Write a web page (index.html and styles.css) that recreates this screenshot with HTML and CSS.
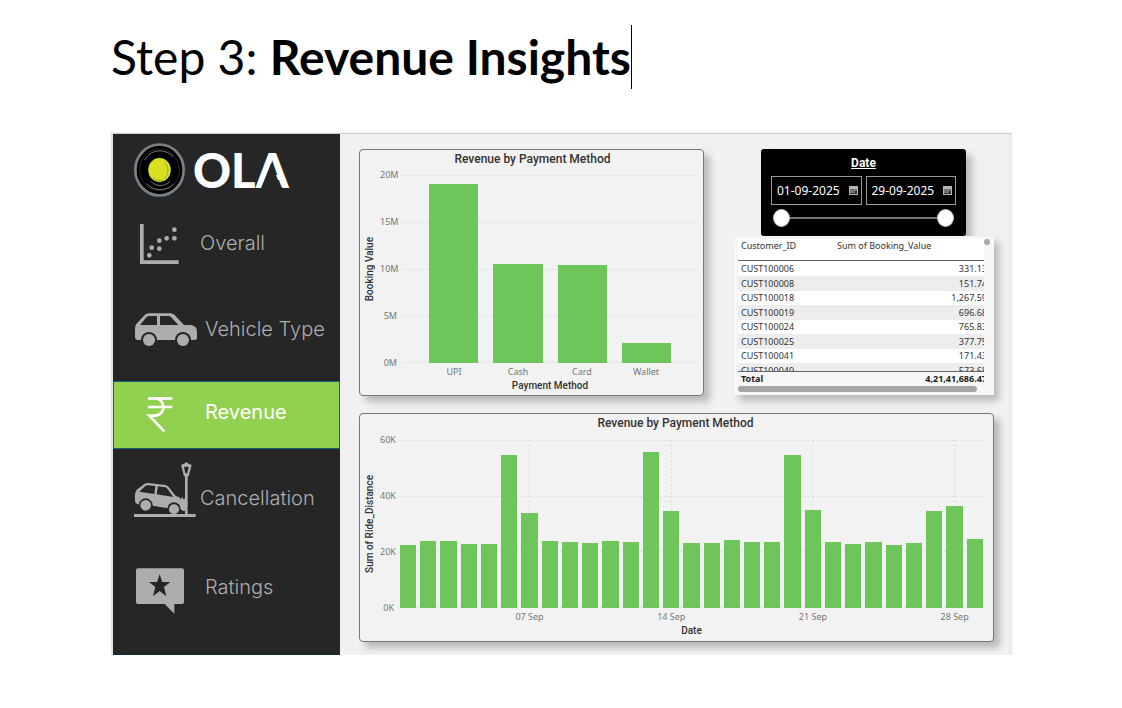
FILE: index.html
```html
<!DOCTYPE html>
<html lang="en">
<head>
<meta charset="utf-8">
<meta name="viewport" content="width=device-width, initial-scale=1">
<title>Revenue Insights</title>
<link rel="stylesheet" href="styles.css">
</head>
<body>
<main class="page">
  <h1 class="heading">Step 3: <strong>Revenue Insights</strong></h1>
  <div class="dashboard">
    <aside class="sidebar">
      <div class="brand">
        <svg class="brand-mark" viewBox="83 50 160 168" aria-hidden="true">
          <ellipse cx="163" cy="134" rx="78" ry="82" fill="#000" stroke="#123a52" stroke-width="3"/>
          <ellipse cx="163" cy="134" rx="73" ry="77" fill="none" stroke="#808080" stroke-width="8"/>
          <ellipse cx="163" cy="134" rx="60" ry="63" fill="none" stroke="#3a3a3a" stroke-width="2"/>
          <path d="M118 104c18-34 62-36 86-10M124 175c20 24 60 24 80 2M137 168c12 16 42 18 58 0" fill="none" stroke="#777" stroke-width="3"/>
          <ellipse cx="163" cy="134" rx="34" ry="36" fill="#d7e021"/>
          <path d="M179 112c14 14 12 36-4 50M144 158c8 7 18 10 30 7" fill="none" stroke="#a0a63a" stroke-width="3"/>
        </svg>
        <span class="brand-name">OLA</span>
      </div>
      <nav class="nav">
        <a class="nav-item" href="#overall">
          <svg class="nav-icon" viewBox="27 255 258 198" fill="currentColor" aria-hidden="true">
            <path d="M105 297h11v109h105v11H105z"/>
            <circle cx="133" cy="391" r="7"/><circle cx="140" cy="368" r="7"/><circle cx="163" cy="371" r="7"/><circle cx="163" cy="347" r="7"/><circle cx="185" cy="340" r="7"/><circle cx="208" cy="340" r="7"/><circle cx="208" cy="314" r="7"/>
          </svg>
          <span>Overall</span>
        </a>
        <a class="nav-item indented" href="#vehicle">
          <svg class="nav-icon" viewBox="27 18 258 198" fill="currentColor" aria-hidden="true">
            <path fill-rule="evenodd" d="M90 114q0-9 6-14l23-25q5-5 12-5h66q7 0 12 5l28 30h20q19 2 19 20v19q0 6-7 6H97q-7-2-7-10zM105 105h51V78h-23q-5 0-9 4zM165 105h55l-22-24q-3-3-8-3h-25z"/>
            <circle class="cutout" cx="132" cy="150" r="24"/><circle class="cutout" cx="234" cy="150" r="24"/>
            <circle cx="132" cy="150" r="18"/><circle cx="234" cy="150" r="18"/>
          </svg>
          <span>Vehicle Type</span>
        </a>
        <a class="nav-item indented active raised" href="#revenue" aria-current="page">
          <svg class="nav-icon" viewBox="27 276 258 198" fill="none" stroke="currentColor" stroke-width="8" aria-hidden="true">
            <path d="M129 325h73M129 351h73M147 325c38 0 38 52 0 52h-14l45 47"/>
          </svg>
          <span>Revenue</span>
        </a>
        <a class="nav-item raised" href="#cancellation">
          <svg class="nav-icon" viewBox="27 54 258 198" fill="currentColor" aria-hidden="true">
            <path d="M87 192h185v9H87zM240 78h8v114h-8z"/>
            <path fill-rule="evenodd" d="M240 40l4-4 4 4 12 5-9 34h-14l-9-34zM237 50l4 20h6l4-20z"/>
            <path fill-rule="evenodd" d="M90 131l5-12 23-17q5-4 12-3l51 6q6 1 10 6l22 28 10 2 3 7 6-7 3 7 8-4v39h-8l-10-6-40-3-42-7-44-4q-9-3-9-11zM103 125l45 7 3-24-24-2q-3 0-6 2zM155 133l50 8-18-25q-3-4-7-4l-21-3z"/>
            <circle class="cutout" cx="122" cy="166" r="21"/><circle class="cutout" cx="207" cy="177" r="20"/>
            <circle cx="122" cy="166" r="16"/><circle cx="207" cy="178" r="15"/>
            <path d="M195 192h25v6h-25z"/>
          </svg>
          <span>Cancellation</span>
        </a>
        <a class="nav-item indented" href="#ratings">
          <svg class="nav-icon" viewBox="27 312 258 198" fill="currentColor" aria-hidden="true">
            <path fill-rule="evenodd" d="M99 355h132q6 0 6 6v95q0 6-6 6h-23v29l-29-29H99q-6 0-6-6v-95q0-6 6-6zM164 373l-8 23h-24l19 15-7 28 20-16 20 16-7-28 19-15h-24z"/>
          </svg>
          <span>Ratings</span>
        </a>
      </nav>
    </aside>

    <div class="report">
      <section class="card chart payment">
        <h2 class="chart-title">Revenue by Payment Method</h2>
        <div class="y-title"><span>Booking Value</span></div>
        <div class="y-axis"><span>20M</span><span>15M</span><span>10M</span><span>5M</span><span>0M</span></div>
        <div class="plot">
          <div class="rules"><i></i><i></i><i></i><i></i><i></i></div>
          <div class="bars">
            <div class="bar" style="height:95.4%"></div>
            <div class="bar" style="height:52.8%"></div>
            <div class="bar" style="height:52.2%"></div>
            <div class="bar" style="height:10.7%"></div>
          </div>
        </div>
        <div class="x-axis"><span>UPI</span><span>Cash</span><span>Card</span><span>Wallet</span></div>
        <div class="x-title">Payment Method</div>
      </section>

      <div class="side">
        <section class="slicer" aria-labelledby="slicer-title">
          <h2 class="slicer-title" id="slicer-title">Date</h2>
          <div class="dates">
            <div class="date-field">
              <input class="date-input" type="text" value="01-09-2025" aria-label="Start date">
              <button class="date-button" type="button" aria-label="Pick start date">
                <svg class="calendar" viewBox="0 0 9 9" aria-hidden="true"><path d="M0 0h9v9H0z" fill="#b5b5b5"/><path d="M1 3h7v5H1z" fill="#333"/><path d="M1 4h7M1 6h5" stroke="#b5b5b5"/></svg>
              </button>
            </div>
            <div class="date-field">
              <input class="date-input" type="text" value="29-09-2025" aria-label="End date">
              <button class="date-button" type="button" aria-label="Pick end date">
                <svg class="calendar" viewBox="0 0 9 9" aria-hidden="true"><path d="M0 0h9v9H0z" fill="#b5b5b5"/><path d="M1 3h7v5H1z" fill="#333"/><path d="M1 4h7M1 6h5" stroke="#b5b5b5"/></svg>
              </button>
            </div>
          </div>
          <div class="range">
            <input class="slider" type="range" min="1" max="29" value="1" aria-label="Range start">
            <input class="slider" type="range" min="1" max="29" value="29" aria-label="Range end">
          </div>
        </section>

        <section class="table-card">
          <table class="table">
            <thead><tr><th scope="col">Customer_ID</th><th scope="col">Sum of Booking_Value</th></tr></thead>
            <tbody>
              <tr><td>CUST100006</td><td>331.13</td></tr>
              <tr><td>CUST100008</td><td>151.74</td></tr>
              <tr><td>CUST100018</td><td>1,267.59</td></tr>
              <tr><td>CUST100019</td><td>696.68</td></tr>
              <tr><td>CUST100024</td><td>765.83</td></tr>
              <tr><td>CUST100025</td><td>377.75</td></tr>
              <tr><td>CUST100041</td><td>171.43</td></tr>
              <tr><td>CUST100049</td><td>573.68</td></tr>
            </tbody>
            <tfoot><tr><th scope="row">Total</th><td>4,21,41,686.47</td></tr></tfoot>
          </table>
          <div class="scroll-y"></div>
          <div class="scroll-x"></div>
        </section>
      </div>

      <section class="card chart daily">
        <h2 class="chart-title">Revenue by Payment Method</h2>
        <div class="y-title"><span>Sum of Ride_Distance</span></div>
        <div class="y-axis"><span>60K</span><span>40K</span><span>20K</span><span>0K</span></div>
        <div class="plot">
          <div class="rules"><i></i><i></i><i></i><i></i></div>
          <div class="weeks"><i class="d07"></i><i class="d14"></i><i class="d21"></i><i class="d28"></i></div>
          <div class="bars">
            <div class="bar" style="height:37.8%"></div>
            <div class="bar" style="height:40%"></div>
            <div class="bar" style="height:39.8%"></div>
            <div class="bar" style="height:38.3%"></div>
            <div class="bar" style="height:38.4%"></div>
            <div class="bar" style="height:91.2%"></div>
            <div class="bar" style="height:56.6%"></div>
            <div class="bar" style="height:39.6%"></div>
            <div class="bar" style="height:39%"></div>
            <div class="bar" style="height:38.9%"></div>
            <div class="bar" style="height:39.7%"></div>
            <div class="bar" style="height:39.1%"></div>
            <div class="bar" style="height:93%"></div>
            <div class="bar" style="height:57.8%"></div>
            <div class="bar" style="height:38.6%"></div>
            <div class="bar" style="height:38.7%"></div>
            <div class="bar" style="height:40.2%"></div>
            <div class="bar" style="height:39.1%"></div>
            <div class="bar" style="height:39.5%"></div>
            <div class="bar" style="height:91.3%"></div>
            <div class="bar" style="height:58.4%"></div>
            <div class="bar" style="height:39.3%"></div>
            <div class="bar" style="height:38.1%"></div>
            <div class="bar" style="height:39.1%"></div>
            <div class="bar" style="height:37.8%"></div>
            <div class="bar" style="height:38.7%"></div>
            <div class="bar" style="height:58%"></div>
            <div class="bar" style="height:60.5%"></div>
            <div class="bar" style="height:40.8%"></div>
          </div>
        </div>
        <div class="x-axis"><span class="d07">07 Sep</span><span class="d14">14 Sep</span><span class="d21">21 Sep</span><span class="d28">28 Sep</span></div>
        <div class="x-title">Date</div>
      </section>
    </div>
  </div>
</main>
</body>
</html>
```
FILE: styles.css
```css
* { box-sizing: border-box; }

body {
  margin: 0;
  background: #fff;
  font-family: "Noto Sans", "Open Sans", sans-serif;
  color: #333;
}

h1, h2 { margin: 0; }

.page { padding: 25px 110px 52px 111px; }

.heading {
  display: inline-block;
  margin-bottom: 45px;
  border-right: 1px solid #000;
  font: 400 48px/64px Lato, "Open Sans", sans-serif;
  color: #000;
  white-space: nowrap;
}
.heading strong { font-weight: 700; }

.dashboard {
  display: grid;
  grid-template-columns: 227px minmax(0, 1fr);
  border-left: 2px solid #e4e4e6;
  border-right: 3px solid #ececec;
  background: #f1f1f1;
  box-shadow: 0 -1px 1px #ccc;
}

/* Sidebar */
.sidebar {
  padding-bottom: 34px;
  border: 1px solid #102c40;
  border-top: 0;
  background: #262626;
}

.brand {
  display: flex;
  align-items: center;
  gap: 7px;
  height: 76px;
  padding: 0 0 4px 19px;
}
.brand-mark { width: 53px; height: 56px; }
.brand-name {
  position: relative;
  font: 900 47px/48px Lato, sans-serif;
  color: #fff;
}
/* Opens the crossbar of the last letter */
.brand-name::after {
  content: "";
  position: absolute;
  right: 7px;
  bottom: 5px;
  width: 21px;
  height: 26px;
  background: #262626;
  clip-path: polygon(50% 0, 100% 100%, 0 100%);
}

.nav { display: grid; gap: 20px; }
.nav-item {
  display: flex;
  align-items: center;
  height: 66px;
  font: 300 20px/28px Inter, sans-serif;
  color: #adadad;
  text-decoration: none;
  white-space: nowrap;
}
.nav-icon { width: 86px; height: 66px; overflow: visible; flex: none; }
.cutout { fill: #262626; }
.indented span { padding-left: 5px; }
.raised span { padding-bottom: 7px; }
.active {
  background: #92d050;
  box-shadow: 0 0 0 1px #17627c;
  font-weight: 400;
  color: #fff;
}

/* Report */
.report {
  display: grid;
  grid-template-columns: minmax(0, 345fr) minmax(0, 260fr);
  align-content: start;
  gap: 17px 30px;
  padding: 15px 15px 13px 19px;
}

.card {
  border: 1px solid #777;
  border-radius: 4px;
  background: #f2f2f2;
  box-shadow: 6px 6px 7px #b9b9b9;
}

.chart {
  display: grid;
  font-size: 9px;
  line-height: 12px;
}
.chart-title {
  grid-column: 1 / -1;
  padding-left: 8px;
  font: 500 12px/18px Roboto, sans-serif;
  text-align: center;
}
.y-title, .x-title { font: 500 10px/14px Roboto, sans-serif; }
.y-title { display: grid; place-items: center; }
.y-title span {
  writing-mode: vertical-rl;
  transform: rotate(180deg);
  white-space: nowrap;
}
.y-axis {
  display: flex;
  flex-direction: column;
  justify-content: space-between;
  margin: -6px 0;
  text-align: right;
  color: #777;
}
.plot { display: grid; }
.rules, .bars, .weeks { grid-area: 1 / 1; }
.rules {
  display: flex;
  flex-direction: column;
  justify-content: space-between;
}
.rules i {
  height: 1px;
  background: repeating-linear-gradient(90deg, #dcdcdc 0 2px, transparent 2px 4px);
}
.bars { display: flex; align-items: flex-end; }
.bar { flex: 1; background: #6ec65b; }
.x-axis, .x-title { grid-column: 3; text-align: center; }
.x-title { padding-left: 6px; }
.x-axis { color: #777; white-space: nowrap; }

.payment {
  grid-template-columns: 20px 17px 1fr;
  grid-template-rows: 25px 188px 16px 16px;
  padding-right: 6px;
}
.payment .plot { margin-left: 6px; }
.payment .bars { gap: 15px; padding: 0 26px; }
.payment .x-axis {
  display: grid;
  grid-template-columns: repeat(4, 1fr);
  padding: 3px 19px 0 25px;
}

.daily {
  grid-column: 1 / -1;
  grid-template-columns: 20px 14px 1fr;
  grid-template-rows: 26px 168px 16px 17px;
  padding-right: 10px;
}
.daily .plot, .daily .x-axis { margin-left: 6px; }
.daily .bars { gap: 4px; }
.weeks, .daily .x-axis {
  display: grid;
  grid-template-columns: repeat(29, minmax(0, 1fr));
  column-gap: 4px;
  justify-items: center;
}
.daily .x-axis { padding-top: 3px; }
.daily .x-axis span { width: 40px; margin: 0 -12px; }
.weeks i {
  width: 1px;
  background: repeating-linear-gradient(#dcdcdc 0 2px, transparent 2px 4px);
}
.d07 { grid-column: 7; }
.d14 { grid-column: 14; }
.d21 { grid-column: 21; }
.d28 { grid-column: 28; }

/* Date slicer */
.slicer {
  margin: 0 28px 0 27px;
  padding: 5px 10px 6px;
  border-radius: 3px;
  background: #000;
  box-shadow: 6px 6px 7px #b9b9b9;
}
.slicer-title {
  margin-bottom: 4px;
  font: 700 12px/18px Roboto, sans-serif;
  color: #fff;
  text-align: center;
  text-decoration: underline;
}
.dates { display: flex; gap: 4px; }
.date-field {
  display: flex;
  flex: 1;
  align-items: center;
  min-width: 0;
  height: 29px;
  padding: 0 3px 0 5px;
  border: 1px solid #999;
}
.date-input {
  flex: 1;
  min-width: 0;
  padding: 0;
  border: 0;
  background: none;
  font: 400 12px/18px "Noto Sans", sans-serif;
  color: #fff;
}
.date-button { display: flex; padding: 0; border: 0; background: none; }
.calendar { width: 9px; height: 9px; }
.range { display: grid; align-items: center; height: 26px; margin-bottom: -1px; padding: 0 2px; }
.slider {
  grid-area: 1 / 1;
  appearance: none;
  width: 100%;
  height: 18px;
  margin: 0;
  background: linear-gradient(#77726e, #77726e) center / 90% 2px no-repeat;
}
.slider + .slider { background: none; pointer-events: none; }
.slider::-webkit-slider-thumb {
  appearance: none;
  width: 17px;
  height: 18px;
  border: 1px solid #bbb;
  border-radius: 50%;
  background: #fff;
  pointer-events: auto;
}

/* Customer table */
.table-card {
  position: relative;
  display: grid;
  grid-template-columns: minmax(0, 1fr) 6px;
  padding: 3px 4px;
  background: #f6f6f6;
  box-shadow: 5px 6px 7px #b9b9b9;
}
.table {
  display: block;
  overflow: hidden;
  background: #fff;
  font-size: 9px;
  line-height: 14px;
}
.table thead, .table tbody, .table tfoot { display: block; }
.table tr {
  display: grid;
  grid-template-columns: 96px 1fr;
  padding-left: 3px;
}
.table th, .table td { padding: 0; text-align: left; white-space: nowrap; }
.table thead { height: 22px; border-bottom: 1px solid #666; }
.table thead th { font-weight: 400; }
.table tbody { height: 110px; padding-top: 1px; overflow: hidden; }
.table tbody tr:nth-child(even) { background: #ededed; line-height: 15px; }
.table tbody td + td, .table tfoot td { margin-right: -3px; text-align: right; }
.table tfoot { border-top: 1px solid #666; background: #f6f6f6; font-weight: 700; color: #222; }
.scroll-y { width: 6px; height: 6px; border-radius: 50%; background: #aaa; }
.scroll-x { height: 6px; margin-right: 7px; border-radius: 3px; background: #a6a6a6; }
```
